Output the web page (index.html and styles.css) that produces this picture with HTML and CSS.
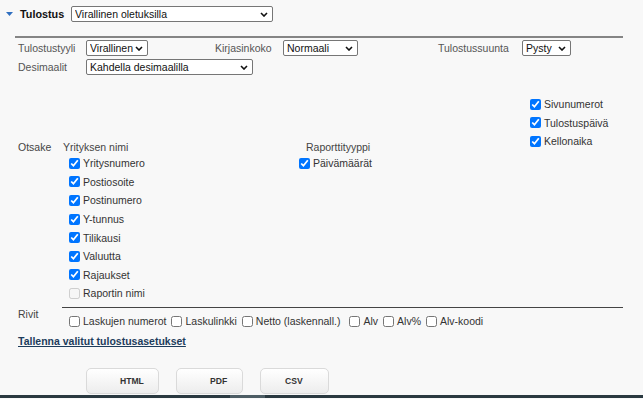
FILE: index.html
```html
<!DOCTYPE html>
<html lang="fi">
<head>
    <meta charset="UTF-8">
    <title>Tulostus</title>
    <link rel="stylesheet" href="styles.css">
</head>
<body>

<div class="page">
    <div class="head">
        <svg class="toggle" width="7" height="4" viewBox="0 0 7 4"><polygon points="0,0 7,0 3.5,4" fill="#2f6fc0"/></svg>
        <span class="head-title">Tulostus</span>
        <select class="sel-preset">
            <option>Virallinen oletuksilla</option>
        </select>
    </div>

    <div class="head-line"></div>

    <div class="opts">
        <span class="opt-label">Tulostustyyli</span>
        <select class="sel-style"><option>Virallinen</option></select>
        <span class="opt-label">Kirjasinkoko</span>
        <select class="sel-size"><option>Normaali</option></select>
        <span class="opt-label">Tulostussuunta</span>
        <select class="sel-dir"><option>Pysty</option></select>

        <span class="opt-label">Desimaalit</span>
        <select class="sel-dec"><option>Kahdella desimaalilla</option></select>
    </div>

    <div class="mid">
        <div class="mid-label">Otsake</div>
        <div class="col-company">
            <div class="col-head">Yrityksen nimi</div>
            <div class="check-list">
                <label class="check"><input type="checkbox" checked>Yritysnumero</label>
                <label class="check"><input type="checkbox" checked>Postiosoite</label>
                <label class="check"><input type="checkbox" checked>Postinumero</label>
                <label class="check"><input type="checkbox" checked>Y-tunnus</label>
                <label class="check"><input type="checkbox" checked>Tilikausi</label>
                <label class="check"><input type="checkbox" checked>Valuutta</label>
                <label class="check"><input type="checkbox" checked>Rajaukset</label>
                <label class="check"><input type="checkbox" disabled>Raportin nimi</label>
            </div>
        </div>
        <div class="col-type">
            <div class="col-head type-head">Raporttityyppi</div>
            <label class="check"><input type="checkbox" checked>Päivämäärät</label>
        </div>
        <div class="col-page">
            <label class="check"><input type="checkbox" checked>Sivunumerot</label>
            <label class="check"><input type="checkbox" checked>Tulostuspäivä</label>
            <label class="check"><input type="checkbox" checked>Kellonaika</label>
        </div>
    </div>

    <div class="rows">
        <div class="rows-label">Rivit</div>
        <div class="rows-opts">
            <label class="check-inline"><input type="checkbox">Laskujen numerot</label>
            <label class="check-inline"><input type="checkbox">Laskulinkki</label>
            <label class="check-inline netto"><input type="checkbox">Netto (laskennall.)</label>
            <label class="check-inline"><input type="checkbox">Alv</label>
            <label class="check-inline"><input type="checkbox">Alv%</label>
            <label class="check-inline"><input type="checkbox">Alv-koodi</label>
        </div>
    </div>

    <a class="save-link" href="#">Tallenna valitut tulostusasetukset</a>

    <div class="buttons">
        <button class="btn btn-html">HTML</button>
        <button class="btn btn-pdf">PDF</button>
        <button class="btn btn-csv">CSV</button>
    </div>

    <div class="taskbar"></div>
</div>

</body>
</html>
```

FILE: styles.css
```css
body {
    margin: 0;
    font-family: "Liberation Sans", Arial, sans-serif;
    font-size: 10.5px;
    color: #333;
    background-color: #f8f8f8;
}

.page {
    padding-top: 6px;
}

.head {
    display: flex;
    align-items: center;
    height: 16px;
    padding-left: 6px;
}

.toggle {
    margin-right: 7px;
}

.head-title {
    font-weight: bold;
    font-size: 10.8px;
    color: #111;
    width: 51px;
}

select {
    appearance: none;
    -webkit-appearance: none;
    height: 16px;
    font-family: "Liberation Sans", Arial, sans-serif;
    font-size: 10.5px;
    color: #111;
    background-color: #fff;
    background-image: url("data:image/svg+xml,%3Csvg xmlns='http://www.w3.org/2000/svg' width='8' height='5' viewBox='0 0 8 5'%3E%3Cpath d='M1 1l3 3 3-3' fill='none' stroke='%23111' stroke-width='1.6'/%3E%3C/svg%3E");
    background-repeat: no-repeat;
    background-position: right 4px center;
    border: 1px solid #767676;
    border-radius: 2px;
    padding: 0 12px 0 3px;
    margin: 0;
}

.sel-preset { width: 202px; }
.sel-style { width: 62px; }
.sel-size { width: 75px; }
.sel-dir { width: 49px; }
.sel-dec { width: 167px; }

.head-line {
    margin: 14px 0 0 15px;
    width: 608px;
    border-top: 2px solid #858585;
}

.opts {
    display: grid;
    grid-template-columns: 68px 129px 68px 155px 84px auto;
    row-gap: 3px;
    align-items: center;
    padding: 2px 0 0 18px;
}

.opts select {
    justify-self: start;
}

.sel-dec {
    grid-column: 2 / span 4;
}

.opt-label {
    color: #555;
}

.mid {
    display: flex;
    align-items: flex-start;
    padding-left: 18px;
    margin-top: 20px;
}

.mid-label {
    width: 45px;
    margin-top: 45px;
    line-height: 14px;
    color: #444;
}

.col-company {
    width: 236px;
    margin-top: 45px;
}

.col-type {
    width: 231px;
    margin-top: 45px;
}

.col-head {
    line-height: 14px;
    color: #444;
}

.type-head {
    padding-left: 7px;
}

.check-list {
    padding-left: 6px;
}

.check {
    display: flex;
    align-items: center;
    height: 18.6px;
}

.check input, .check-inline input {
    width: 11px;
    height: 11px;
    margin: 0 3px 0 0;
}

.rows {
    display: flex;
    padding-left: 18px;
    margin-top: 4px;
}

.rows-label {
    width: 44px;
    line-height: 14px;
    color: #444;
}

.rows-opts {
    display: flex;
    width: 554px;
    padding: 7px 0 0 7px;
    border-top: 1px solid #444;
}

.check-inline {
    display: flex;
    align-items: center;
    height: 13px;
    margin-right: 5px;
}

.check-inline.netto {
    margin-right: 9px;
}

.save-link {
    display: block;
    margin: 6px 0 0 18px;
    line-height: 14px;
    font-weight: bold;
    color: #1d3c5c;
}

.buttons {
    display: flex;
    gap: 17px;
    padding-left: 86px;
    margin-top: 20px;
}

.btn {
    height: 26px;
    border: 1px solid #dadada;
    border-radius: 5px;
    background: linear-gradient(#ffffff, #ededed);
    font-family: "Liberation Sans", Arial, sans-serif;
    font-size: 8.6px;
    font-weight: bold;
    color: #333;
    text-align: left;
    padding: 0;
}

.btn-html { width: 73px; padding-left: 33px; }
.btn-pdf { width: 67px; padding-left: 33px; }
.btn-csv { width: 69px; padding-left: 24px; }

.taskbar {
    height: 3px;
    margin-top: 1px;
    background: linear-gradient(90deg, #2a3940 0, #2a3940 230px, #4d5d64 230px, #4d5d64 265px, #2a3940 265px);
}
```
